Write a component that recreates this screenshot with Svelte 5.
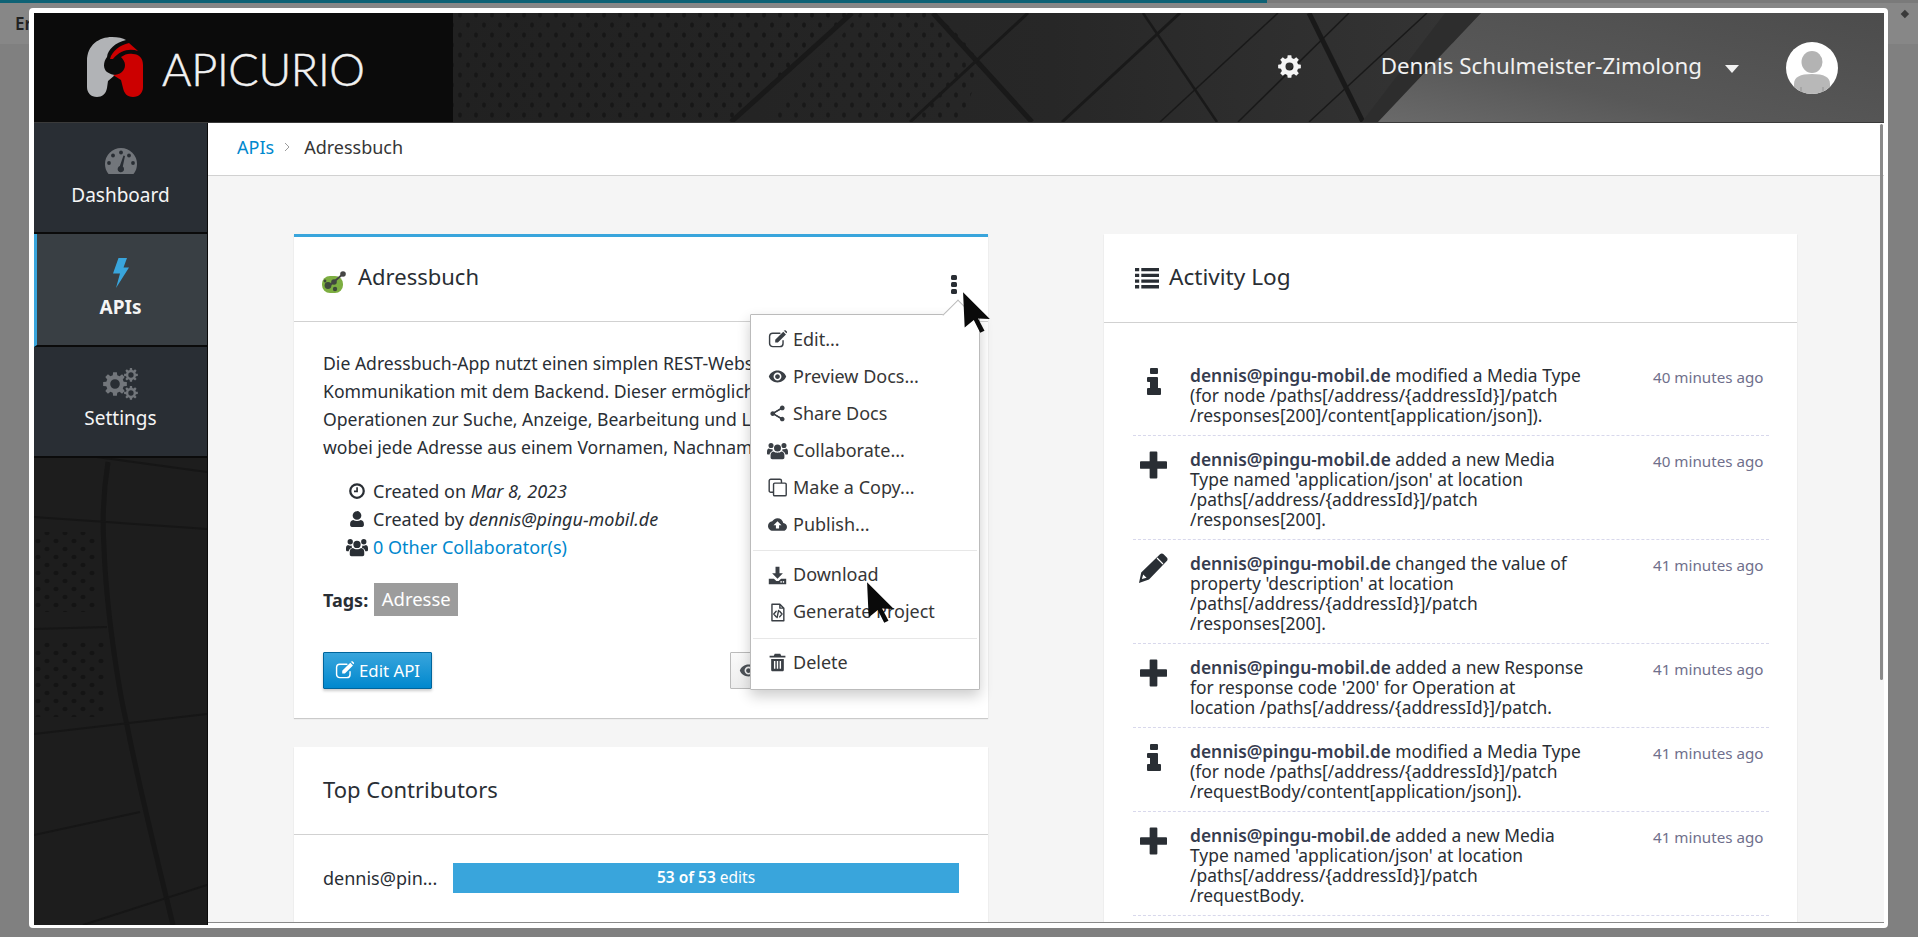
<script>
  function gear(n, R, r, h) {
    const pts = [];
    const step = (Math.PI * 2) / n;
    for (let i = 0; i < n; i++) {
      const a = i * step - Math.PI / 2;
      const w = step * 0.2;
      const w2 = step * 0.3;
      const p = (rad, ang) => (12 + rad * Math.cos(ang)).toFixed(2) + " " + (12 + rad * Math.sin(ang)).toFixed(2);
      pts.push(p(r, a - w2 - 0.02), p(R, a - w), p(R, a + w), p(r, a + w2 + 0.02));
    }
    const ring = "M" + pts.join("L") + "Z";
    const hole = `M${12 - h} 12a${h} ${h} 0 1 0 ${2 * h} 0a${h} ${h} 0 1 0 ${-2 * h} 0Z`;
    return ring + hole;
  }
  const topGearD = gear(8, 12, 9.2, 4.2);
  const bigGearD = gear(8, 12, 9, 4.8);
  const smallGearD = gear(8, 12, 8.8, 4.6);
  const icons = {
    clock: { d: "M12 1.5a10.5 10.5 0 1 0 0 21 10.5 10.5 0 0 0 0-21zm0 3a7.5 7.5 0 1 1 0 15 7.5 7.5 0 0 1 0-15zM11 7h2.2v6.6H8v-2.2h3z" },
    user: { d: "M12 1.5a5.8 5.8 0 1 1 0 11.6 5.800 5.800 0 0 1 0-11.600zM7 13.200c1.400 1 3 1.500 5 1.500s3.600-.5 5-1.500c2.600.3 4.200 2.300 4.200 5.300v1.600c0 1.500-1 2.400-2.400 2.400H5.200c-1.400 0-2.400-.9-2.400-2.400v-1.600c0-3 1.600-5 4.200-5.300z" },
    users: { d: "M12 5.200a4 4 0 1 1 0 8 4 4 0 0 1 0-8zM4.600 3.400a2.900 2.900 0 1 1 0 5.800 2.900 2.900 0 0 1 0-5.800zM19.400 3.400a2.900 2.900 0 1 1 0 5.800 2.900 2.900 0 0 1 0-5.800zM7.600 13.200c1.100 1 2.600 1.300 4.400 1.300s3.300-.3 4.400-1.300c2.500.2 3.500 2 3.500 4.300v2.600c0 1-.8 1.900-1.900 1.900H6c-1.100 0-1.900-.9-1.900-1.900v-2.600c0-2.300 1-4.100 3.500-4.300zM2.200 9.800c.7.6 1.500.9 2.400.9.8 0 1.200-.1 1.700-.3-.2.8-.1 1.600.3 2.300-1.900.5-3.300 1.800-3.700 3.800H.9c-.5 0-.9-.4-.9-.9v-2.300c0-1.800.8-3.200 2.200-3.500zM21.800 9.800c1.400.3 2.200 1.700 2.200 3.500v2.300c0 .5-.4.9-.9.9h-2c-.4-2-1.800-3.300-3.700-3.800.4-.7.5-1.500.3-2.300.5.2.9.3 1.700.3.9 0 1.700-.3 2.400-.9z" },
    edit: { s: "M19 13.500V17a4 4 0 0 1-4 4H6a4 4 0 0 1-4-4V8a4 4 0 0 1 4-4h9", d: "M19.300 2.200l3.400 3.400-10.200 10.200H9.100v-3.400zM21 .6c.4-.4 1-.4 1.400 0l1.400 1.400c.4.4.4 1 0 1.400l-.6.6-3.400-3.400z" },
    eye: { d: "M12 4.500C7 4.500 2.730 7.610 1 12c1.730 4.390 6 7.500 11 7.500s9.270-3.110 11-7.500c-1.730-4.390-6-7.500-11-7.500zM12 17c-2.760 0-5-2.240-5-5s2.240-5 5-5 5 2.240 5 5-2.240 5-5 5zm0-8c-1.660 0-3 1.340-3 3s1.340 3 3 3 3-1.340 3-3-1.340-3-3-3z" },
    share: { d: "M18 16.080c-.76 0-1.440.3-1.960.77L8.910 12.700c.05-.23.09-.46.09-.7s-.04-.47-.09-.7l7.050-4.110c.54.5 1.250.81 2.040.81 1.660 0 3-1.340 3-3s-1.340-3-3-3-3 1.340-3 3c0 .24.04.47.09.7L8.040 9.810C7.500 9.310 6.790 9 6 9c-1.660 0-3 1.340-3 3s1.340 3 3 3c.79 0 1.500-.31 2.040-.81l7.120 4.160c-.05.21-.08.43-.08.65 0 1.610 1.310 2.920 2.920 2.920s2.920-1.310 2.920-2.920-1.310-2.920-2.920-2.920z", s: "M6 12L18 5M6 12l12 7" },
    copy: { s: "M6 18H3.500a2 2 0 0 1-2-2V3.500a2 2 0 0 1 2-2H15a2 2 0 0 1 2 2V6M8.500 6.500h13a1.500 1.500 0 0 1 1.500 1.500v13a1.500 1.500 0 0 1-1.500 1.500h-13A1.500 1.500 0 0 1 7 21V8a1.500 1.500 0 0 1 1.500-1.500z" },
    cloud: { d: "M19.350 10.040C18.670 6.590 15.640 4 12 4 9.110 4 6.600 5.640 5.350 8.040 2.340 8.360 0 10.910 0 14c0 3.310 2.690 6 6 6h13c2.760 0 5-2.240 5-5 0-2.640-2.050-4.780-4.650-4.960zM14 13v4h-4v-4H7l5-5 5 5h-3z" },
    download: { d: "M9.500 1h5v8h4.300L12 16 5.200 9h4.300zM1 16h6.500l3 3h3l3-3H23v7H1zM17.500 20a1 1 0 1 0 0 .01zM20.500 20a1 1 0 1 0 0 .01z" },
    code: { s: "M5 1.500h10l5 5V22.500H5zM15 1.500v5h5M10.300 10.500l-3 3.500 3 3.500M14.700 10.500l3 3.500-3 3.500M13.300 9.500l-1.800 9" },
    trash: { d: "M8.500 1h7l1.200 2.500H22v2.300H2V3.500h5.300zM4 7.500h16V21c0 1.200-.8 2-2 2H6c-1.200 0-2-.8-2-2zM7.500 10v10h1.800V10zM11.100 10v10h1.800V10zM14.700 10v10h1.800V10z" },
    list: { d: "M0 2h4.200v3.300H0zM6.300 2H24v3.300H6.300zM0 7.700h4.200V11H0zM6.300 7.700H24V11H6.300zM0 13.400h4.200v3.300H0zM6.300 13.400H24v3.300H6.300zM0 19.100h4.200v3.300H0zM6.300 19.100H24v3.300H6.300z" }
  };
  const logIcons = {
    info: { box: "0 0 14 27", d: "M4 0h6a1 1 0 0 1 1 1v4a1 1 0 0 1-1 1H4a1 1 0 0 1-1-1V1a1 1 0 0 1 1-1zM1 9h9a1 1 0 0 1 1 1v10h2a1 1 0 0 1 1 1v5a1 1 0 0 1-1 1H1a1 1 0 0 1-1-1v-5a1 1 0 0 1 1-1h2v-6H1a1 1 0 0 1-1-1v-3a1 1 0 0 1 1-1z" },
    plus: { box: "0 0 28 28", d: "M11 0h6a1 1 0 0 1 1 1v9h9a1 1 0 0 1 1 1v6a1 1 0 0 1-1 1h-9v9a1 1 0 0 1-1 1h-6a1 1 0 0 1-1-1v-9H1a1 1 0 0 1-1-1v-6a1 1 0 0 1 1-1h9V1a1 1 0 0 1 1-1z" },
    pencil: { box: "0 0 30 30", d: "M22 1.200C23 .2 24.600 .2 25.600 1.200L28.800 4.400C29.800 5.400 29.800 7 28.800 8L11 26.500L1 30L3.200 19.500ZM5.200 21.500L3.900 26.100L8.600 24.800ZM18.600 5.400L24.600 11.400L25.400 10.600L19.400 4.600Z" }
  };
  const menu = [
    [["edit", "Edit..."], ["eye", "Preview Docs..."], ["share", "Share Docs"], ["users", "Collaborate..."], ["copy", "Make a Copy..."], ["cloud", "Publish..."]],
    [["download", "Download"], ["code", "Generate Project"]],
    [["trash", "Delete"]]
  ];
  const log = [
    { icon: "info", time: "40 minutes ago", first: "modified a Media Type", rest: ["(for node /paths[/address/{addressId}]/patch", "/responses[200]/content[application/json])."] },
    { icon: "plus", time: "40 minutes ago", first: "added a new Media", rest: ["Type named 'application/json' at location", "/paths[/address/{addressId}]/patch", "/responses[200]."] },
    { icon: "pencil", time: "41 minutes ago", first: "changed the value of", rest: ["property 'description' at location", "/paths[/address/{addressId}]/patch", "/responses[200]."] },
    { icon: "plus", time: "41 minutes ago", first: "added a new Response", rest: ["for response code '200' for Operation at", "location /paths[/address/{addressId}]/patch."] },
    { icon: "info", time: "41 minutes ago", first: "modified a Media Type", rest: ["(for node /paths[/address/{addressId}]/patch", "/requestBody/content[application/json])."] },
    { icon: "plus", time: "41 minutes ago", first: "added a new Media", rest: ["Type named 'application/json' at location", "/paths[/address/{addressId}]/patch", "/requestBody."] }
  ];
  const description = [
    "Die Adressbuch-App nutzt einen simplen REST-Webservice",
    "Kommunikation mit dem Backend. Dieser ermöglicht",
    "Operationen zur Suche, Anzeige, Bearbeitung und Löschung",
    "wobei jede Adresse aus einem Vornamen, Nachnamen"
  ];
</script>

{#snippet ico(name, cls)}
  <svg class="ico {cls} i-{name}" viewBox="0 0 24 24" aria-hidden="true">
    {#if icons[name].d}<path fill-rule="evenodd" d={icons[name].d} />{/if}
    {#if icons[name].s}<path class="st" d={icons[name].s} />{/if}
  </svg>
{/snippet}

{#snippet cursor(cls)}
  <svg class="cursor {cls}" viewBox="0 0 28 40" aria-hidden="true">
    <path d="M1 1 L26 26 L15 25.500 L21 37 L17 39 L11 27 L2.500 34 Z" />
  </svg>
{/snippet}

<div class="screen">
  <div class="behind">
    <div class="progress"><div class="progress-fill"></div></div>
    <div class="behind-bar"><span class="behind-text">Er</span><i class="behind-mark"></i></div>
  </div>

  <div class="window">
    <header class="topbar">
      <svg class="topbar-art" viewBox="0 0 1850 109" preserveAspectRatio="none" aria-hidden="true">
        <defs>
          <pattern id="dots" width="16" height="20" patternUnits="userSpaceOnUse">
            <ellipse cx="4" cy="5" rx="2" ry="2.700" fill="#171717" />
            <ellipse cx="12" cy="15" rx="2" ry="2.700" fill="#171717" />
          </pattern>
          <linearGradient id="base" x1="0" x2="1">
            <stop offset="0" stop-color="#212121" />
            <stop offset="0.6" stop-color="#272727" />
            <stop offset="1" stop-color="#343434" />
          </linearGradient>
          <linearGradient id="light" x1="0" y1="1" x2="1" y2="0">
            <stop offset="0" stop-color="#6a6a6a" />
            <stop offset="0.35" stop-color="#585858" />
            <stop offset="1" stop-color="#4c4c4c" />
          </linearGradient>
        </defs>
        <g transform="translate(-34 -13)">
          <rect x="453" y="13" width="1000" height="109" fill="url(#base)" />
          <polygon points="453,13 852,13 731,122 453,122" fill="url(#dots)" />
          <polygon points="860,13 935,13 985,60 960,122 770,122" fill="url(#dots)" opacity=".85" />
          <g stroke="#191919" fill="none">
            <path d="M852 13 L731 122" stroke-width="5" />
            <path d="M933 13 L1032 122" stroke-width="5" />
            <path d="M1028 13 L910 122" stroke-width="3" />
            <path d="M1180 13 L1062 122" stroke-width="3" />
            <path d="M1143 13 L1217 122" stroke-width="2.500" />
            <path d="M1278 13 L1160 122" stroke-width="1.500" />
            <path d="M1309 13 L1363 122" stroke-width="5" />
            <path d="M1349 13 L1238 122" stroke-width="1.500" />
            <path d="M1427 13 L1309 122" stroke-width="1.500" />
            <path d="M1453 13 L1453 60" stroke-width="1.500" />
          </g>
          <polygon points="1445,13 1481,13 1378,122 1362,122" fill="#2d2d2d" />
          <polygon points="1481,13 1884,13 1884,122 1378,122" fill="url(#light)" />
          <rect x="34" y="13" width="419" height="109" fill="#0b0b0b" />
        </g>
      </svg>

      <div class="brand">
        <svg class="brand-mark" viewBox="87 38 57 61" aria-hidden="true">
          <path fill="#b1b3b6" d="M87 62C87 46 99 38 112 38C118 38 123 39 126 41C115 44 108 50 107 58C103 63 103 70 107 73C110 75 113 76 115 76L108 82L107 89C106 95 102 98 97 98C91 98 87 94 87 88Z" />
          <path fill="#cc0000" d="M110 60C112 52 120 46 129 44L138 52C130 49 120 51 113 60Z" />
          <path fill="#cc0000" d="M121 58C125 55 129 54 133 55C139 55 143 59 143 66V88C143 94 139 98 133 98C127 98 124 94 123 89L121 81L113 76C120 76 125 72 125 66C125 63 123 60 121 58Z" />
        </svg>
        <span class="brand-name">APICURIO</span>
      </div>

      <div class="topbar-right">
        <svg class="top-gear" viewBox="0 0 24 24" aria-hidden="true"><path fill-rule="evenodd" d={topGearD} /></svg>
        <span class="username">Dennis Schulmeister-Zimolong</span>
        <i class="caret"></i>
        <svg class="avatar" viewBox="0 0 52 52" aria-hidden="true">
          <defs><clipPath id="av"><circle cx="26" cy="26" r="26" /></clipPath></defs>
          <circle cx="26" cy="26" r="26" fill="#fff" />
          <g clip-path="url(#av)">
            <ellipse cx="26" cy="20" rx="10.500" ry="11" fill="#b3b3b3" />
            <path d="M8 52V42C8 35 14 32 26 32S44 35 44 42V52Z" fill="#b8b8b8" />
            <path d="M15 52V45M37 52V45" stroke="#a5a5a5" stroke-width="2" />
          </g>
        </svg>
      </div>
    </header>

    <div class="below">
      <nav class="sidebar">
        <svg class="sidebar-art" viewBox="0 0 173 468" aria-hidden="true">
          <defs>
            <pattern id="sdots" width="18" height="16" patternUnits="userSpaceOnUse">
              <ellipse cx="4" cy="4" rx="2.600" ry="2.200" fill="#141414" />
              <ellipse cx="13" cy="12" rx="2.600" ry="2.200" fill="#141414" />
            </pattern>
          </defs>
          <rect width="173" height="468" fill="#1d1d1d" />
          <polygon points="0,75 62,75 62,155 0,155" fill="url(#sdots)" />
          <polygon points="0,185 70,185 70,260 0,260" fill="url(#sdots)" />
          <g fill="none" stroke="#161616">
            <path d="M74 5C70 30 68 60 70 90C72 150 84 230 93 268C105 330 125 410 139 468" stroke-width="5" />
            <path d="M63 0L173 15M0 60L173 72M0 172L73 170M0 277L173 257M0 378L106 355M49 468L173 428" stroke-width="2" />
          </g>
        </svg>
        <div class="nav-item nav-dash">
          <span class="nav-icon">
            <svg class="gauge" viewBox="0 0 32 26" aria-hidden="true">
              <path d="M3.500 26C1.200 23 0 20 0 16A16 16 0 0 1 32 16C32 20 30.800 23 28.500 26Z" fill="#72767b" />
              <g fill="#292e34">
                <circle cx="16" cy="4.500" r="1.900" /><circle cx="8" cy="7.500" r="1.900" /><circle cx="24" cy="7.500" r="1.900" />
                <circle cx="4" cy="15" r="1.900" /><circle cx="28" cy="15" r="1.900" />
                <path d="M18.500 7.500L20 8L17.800 18.500A3.200 3.200 0 1 1 14.800 18Z" />
              </g>
            </svg>
          </span>
          <span class="nav-label">Dashboard</span>
        </div>
        <div class="nav-item nav-apis">
          <span class="nav-icon">
            <svg class="bolt" viewBox="0 0 16 30" aria-hidden="true"><path d="M5.500 0H14L10.500 9.500H16L3 30L7 15.500H0Z" fill="#39a5dc" /></svg>
          </span>
          <span class="nav-label strong">APIs</span>
        </div>
        <div class="nav-item nav-set">
          <span class="nav-icon">
            <svg class="gears" viewBox="0 0 35 32" aria-hidden="true">
              <g fill="#72767b" fill-rule="evenodd">
                <path transform="translate(0 4)" d={bigGearD} />
                <path transform="translate(21 0) scale(.58)" d={smallGearD} />
                <path transform="translate(21 18) scale(.58)" d={smallGearD} />
              </g>
            </svg>
          </span>
          <span class="nav-label">Settings</span>
        </div>
      </nav>

      <main class="main">
        <div class="crumbs">
          <span class="crumb-link">APIs</span>
          <svg class="crumb-sep" viewBox="0 0 6 10" aria-hidden="true"><path d="M1 1l4 4-4 4" /></svg>
          <span class="crumb-cur">Adressbuch</span>
        </div>

        <div class="content">
          <div class="col">
            <section class="card card-api">
              <div class="card-head api-head">
                <svg class="api-logo" viewBox="0 0 24 22" aria-hidden="true">
                  <rect x="0" y="5" width="21" height="17" rx="8" fill="#7dae41" />
                  <circle cx="6" cy="14.500" r="3.400" fill="#3f4a3c" /><circle cx="12" cy="11" r="2.800" fill="#3f4a3c" />
                  <circle cx="13" cy="18" r="2.200" fill="#3f4a3c" /><circle cx="3" cy="10" r="1.400" fill="#3f4a3c" />
                  <path d="M7 15L21 3" stroke="#444" stroke-width="1.800" /><circle cx="21" cy="3" r="2.800" fill="#444" />
                </svg>
                <h2 class="card-title api-title">Adressbuch</h2>
                <span class="kebab"><i></i><i></i><i></i></span>
              </div>
              <div class="api-body">
                <p class="desc">
                  {#each description as line}<span class="line">{line}</span>{/each}
                </p>
                <ul class="meta">
                  <li>{@render ico("clock", "meta-ico")}<span>Created on <em>Mar 8, 2023</em></span></li>
                  <li>{@render ico("user", "meta-ico")}<span>Created by <em>dennis@pingu-mobil.de</em></span></li>
                  <li>{@render ico("users", "meta-ico")}<span class="link">0 Other Collaborator(s)</span></li>
                </ul>
                <div class="tags"><strong>Tags:</strong><span class="tag">Adresse</span></div>
                <div class="actions">
                  <button class="btn btn-primary">{@render ico("edit", "btn-ico")}Edit API</button>
                  <button class="btn btn-plain" aria-label="Preview">{@render ico("eye", "btn-ico")}</button>
                </div>
              </div>

              <div class="menu">
                <i class="menu-tip"></i>
                {#each menu as group, g}
                  {#if g > 0}<div class="menu-div"></div>{/if}
                  {#each group as item}
                    <div class="menu-item">{@render ico(item[0], "menu-ico")}<span>{item[1]}</span></div>
                  {/each}
                {/each}
              </div>
            </section>

            <section class="card card-top">
              <div class="card-head top-head"><h2 class="card-title">Top Contributors</h2></div>
              <div class="contrib">
                <span class="contrib-name">dennis@pin...</span>
                <div class="bar"><span class="bar-text"><strong>53 of 53</strong>&nbsp;edits</span></div>
              </div>
            </section>
          </div>

          <div class="col">
            <section class="card card-log">
              <div class="card-head log-head">
                {@render ico("list", "list-ico")}
                <h2 class="card-title log-title">Activity Log</h2>
              </div>
              <div class="log">
                {#each log as row}
                  <div class="row">
                    <div class="row-ico">
                      <svg class="log-ico {row.icon}" viewBox={logIcons[row.icon].box} aria-hidden="true"><path fill-rule="evenodd" d={logIcons[row.icon].d} /></svg>
                    </div>
                    <div class="row-text">
                      <span class="line"><b>dennis@pingu-mobil.de</b> {row.first}</span>
                      {#each row.rest as l}<span class="line">{l}</span>{/each}
                    </div>
                    <div class="row-time">{row.time}</div>
                  </div>
                {/each}
              </div>
            </section>
          </div>
        </div>
        <div class="scroll"></div>
      </main>
    </div>
  </div>

  {@render cursor("cursor-a")}
  {@render cursor("cursor-b")}
</div>

<style>
  :global(body) { margin: 0; background: #808080; }
  .screen {
    position: relative; width: 1918px; height: 937px; overflow: hidden;
    background: #808080;
    font-family: "Noto Sans", "Open Sans", sans-serif; color: #292e34;
    font-size: 18px;
  }
  .behind { display: flex; flex-direction: column; }
  .progress { height: 3px; background: #7a7a7a; }
  .progress-fill { width: 1267px; height: 100%; background: #0e6275; }
  .behind-bar { height: 41px; background: #878787; display: flex; align-items: center; justify-content: space-between; padding: 0 20px 0 15px; }
  .behind-text { font-size: 17px; font-weight: 600; color: #222; }
  .behind-mark { width: 6px; height: 6px; background: #3a3a3a; transform: rotate(45deg) translateY(-14px); }

  .window {
    position: absolute; left: 29px; top: 8px; width: 1850px; height: 912px;
    border: solid #fff; border-width: 5px 4px 3px 5px; border-radius: 4px;
    display: flex; flex-direction: column; overflow: hidden; background: #fff;
  }

  .topbar { position: relative; height: 109px; flex: none; display: flex; align-items: center; background: #222; border-bottom: 1px solid #3a3a3a; box-sizing: content-box; }
  .topbar-art { position: absolute; inset: 0; width: 100%; height: 100%; }
  .brand { position: relative; display: flex; align-items: center; padding-left: 53px; gap: 18px; }
  .brand-mark { width: 57px; height: 61px; }
  .brand-name { font-family: Lato, sans-serif; font-weight: 300; font-size: 45px; line-height: 1; color: #f2f2f2; letter-spacing: -.3px; margin-top: 3px; -webkit-text-stroke: .5px #f2f2f2; }
  .topbar-right { position: relative; margin-left: auto; display: flex; align-items: center; padding-right: 46px; }
  .top-gear { width: 23px; height: 23px; fill: #f4f4f4; margin-right: 80px; margin-top: -2px; }
  .username { font-size: 22.300px; color: #f1f1f1; white-space: nowrap; margin-right: 23px; margin-top: -5px; }
  .caret { width: 0; height: 0; border: solid transparent; border-width: 8px 7px 0; border-top-color: #f1f1f1; margin-right: 47px; margin-top: 3px; }
  .avatar { width: 52px; height: 52px; }

  .below { flex: 1; display: flex; min-height: 0; }
  .sidebar { position: relative; width: 173px; flex: none; border-right: 1px solid #0a0a0a; background: #1d1d1d; }
  .sidebar-art { position: absolute; left: 0; top: 334px; width: 173px; height: 468px; }
  .nav-item { position: relative; display: flex; flex-direction: column; align-items: center; box-sizing: border-box; background: #292e34; border-bottom: 2px solid #0b0b0b; }
  .nav-dash { height: 111px; padding-top: 22px; }
  .nav-apis { height: 113px; padding-top: 23px; background: #393f44; border-left: 3px solid #39a5dc; padding-right: 3px; }
  .nav-set { height: 111px; padding-top: 21px; }
  .nav-icon { height: 32px; display: flex; align-items: center; justify-content: center; }
  .gauge { width: 32px; height: 26px; }
  .bolt { width: 16px; height: 30px; }
  .gears { width: 35px; height: 32px; }
  .nav-label { margin-top: 8px; line-height: 20px; font-size: 19px; color: #f5f5f5; }
  .strong { font-weight: 700; }

  .main { position: relative; flex: 1; min-width: 0; background: #f5f5f5; overflow: hidden; margin-bottom: 2px; border-bottom: 1px solid #8a8a8a; }
  .crumbs { background: #fff; border-bottom: 1px solid #d1d1d1; display: flex; align-items: center; padding: 0 0 4px 29px; box-sizing: content-box; height: 48px; font-size: 18px; }
  .crumb-link { color: #0088ce; }
  .crumb-sep { width: 6px; height: 10px; margin: 0 14px 0 10px; fill: none; stroke: #9c9c9c; stroke-width: 1; }
  .crumb-cur { color: #363636; }

  .content { display: grid; grid-template-columns: 694px 693px; column-gap: 116px; padding: 58px 0 0 86px; }
  .col { display: flex; flex-direction: column; gap: 29px; }
  .card { position: relative; background: #fff; box-shadow: 0 1px 1px rgba(3,3,3,.175); }
  .card-api { border-top: 3px solid #39a5dc; }
  .card-head { display: flex; align-items: center; border-bottom: 1px solid #d1d1d1; box-sizing: border-box; padding-left: 29px; }
  .card-title { margin: 0 0 4px; font-size: 22px; font-weight: 400; color: #292e34; line-height: 24px; }
  .api-title { margin-bottom: 6px; }
  .log-title { margin-bottom: 2px; font-size: 22.600px; }
  .api-head { height: 85px; padding-left: 28px; }
  .api-logo { width: 24px; height: 22px; margin-right: 12px; margin-top: 5px; }
  .kebab { position: absolute; left: 657px; top: 38px; display: flex; flex-direction: column; gap: 2px; }
  .kebab i { width: 6px; height: 5px; background: #292e34; border-radius: 1.500px; }
  .api-body { padding: 27px 29px 29px 29px; }
  .desc { margin: 0; line-height: 28px; font-size: 17.600px; }
  .line { display: block; white-space: nowrap; }
  .meta { list-style: none; margin: 16px 0 0; padding: 0 0 0 25px; line-height: 28px; }
  .meta li { display: flex; align-items: center; }
  .ico { fill: currentColor; flex: none; }
  .st { fill: none; stroke: currentColor; stroke-width: 1.800; stroke-linejoin: round; stroke-linecap: round; }
  .meta-ico { width: 18px; height: 18px; margin-right: 7px; }
  .meta-ico.i-users { width: 22px; height: 22px; margin: 0 5px 0 -2px; }
  .link { color: #0088ce; }
  .tags { margin-top: 22px; display: flex; align-items: center; gap: 6px; }
  .tags strong { font-weight: 700; }
  .tag { background: #9c9c9c; color: #fff; height: 33px; line-height: 32px; padding: 0 7.500px; font-size: 18.500px; }
  .actions { margin-top: 36px; display: flex; justify-content: space-between; }
  .btn { height: 37px; box-sizing: border-box; font: inherit; font-size: 16.800px; display: flex; align-items: center; gap: 5px; border-radius: 1px; white-space: nowrap; overflow: hidden; }
  .btn-primary { width: 109px; justify-content: center; padding: 0; color: #fff; background: linear-gradient(#39a5dc, #0088ce); border: 1px solid #00659c; box-shadow: 0 2px 3px rgba(3,3,3,.2); }
  .btn-plain { width: 229px; padding: 0 8px; color: #4d5258; background: linear-gradient(#fafafa, #ededed); border: 1px solid #bbb; }
  .btn-ico { width: 19px; height: 19px; }

  .menu { position: absolute; left: 456px; top: 77px; width: 230px; height: 376px; box-sizing: border-box; padding: 6px 1px 0; background: #fff; border: 1px solid #bbb; border-radius: 1px; box-shadow: 0 6px 14px rgba(3,3,3,.2); z-index: 3; }
  .menu-tip { position: absolute; left: 196px; top: -11px; width: 21px; height: 21px; background: #fff; border: solid #bbb; border-width: 1px 0 0 1px; transform: rotate(45deg); }
  .menu-item { position: relative; height: 37px; display: flex; align-items: center; padding-left: 16px; color: #363636; white-space: nowrap; }
  .menu-item span { padding-bottom: 2px; }
  .menu-ico { width: 19px; height: 19px; margin-right: 6px; color: #3a3f45; }
  .menu-ico.i-users { width: 21px; height: 21px; margin: 0 5px 0 -1px; }
  .menu-div { height: 1px; background: #e7e7e7; margin: 7px 1px 5.500px; }

  .top-head { height: 88px; }
  .contrib { display: flex; align-items: center; padding: 28px 29px 40px 29px; }
  .contrib-name { width: 130px; flex: none; white-space: nowrap; }
  .bar { flex: 1; height: 30px; background: #39a5dc; color: #fff; display: flex; align-items: center; justify-content: center; font-size: 15.500px; }
  .bar-text { padding-bottom: 2px; }
  .bar strong { font-weight: 600; }

  .log-head { height: 89px; gap: 10px; padding-left: 31px; }
  .list-ico { width: 24px; height: 24px; }
  .log { padding: 29px 28px 60px 29px; }
  .row { display: grid; grid-template-columns: 57px 463px 1fr; padding: 13px 0 10px; border-bottom: 1px dashed #d8d8ec; line-height: 20px; font-size: 17.400px; }
  .row-text b { font-weight: 600; color: #363c4f; }
  .row-ico { display: flex; justify-content: center; position: relative; }
  .log-ico { fill: #292e34; flex: none; }
  .info { width: 14px; height: 27px; margin-top: 3px; margin-right: 15px; }
  .plus { width: 27px; height: 28px; margin-top: 2px; margin-right: 16px; }
  .pencil { width: 30px; height: 30px; margin-right: 17px; }
  .row-time { font-size: 15.200px; color: #6f6f8c; padding-top: 2px; white-space: nowrap; }

  .scroll { position: absolute; right: 1px; top: 1px; width: 3px; height: 556px; background: #8a8a8a; border-radius: 2px; }

  .cursor { position: absolute; width: 30px; height: 43px; fill: #0a0a0a; z-index: 5; }
  .cursor-a { left: 962px; top: 291px; }
  .cursor-b { left: 866px; top: 581px; }
</style>
